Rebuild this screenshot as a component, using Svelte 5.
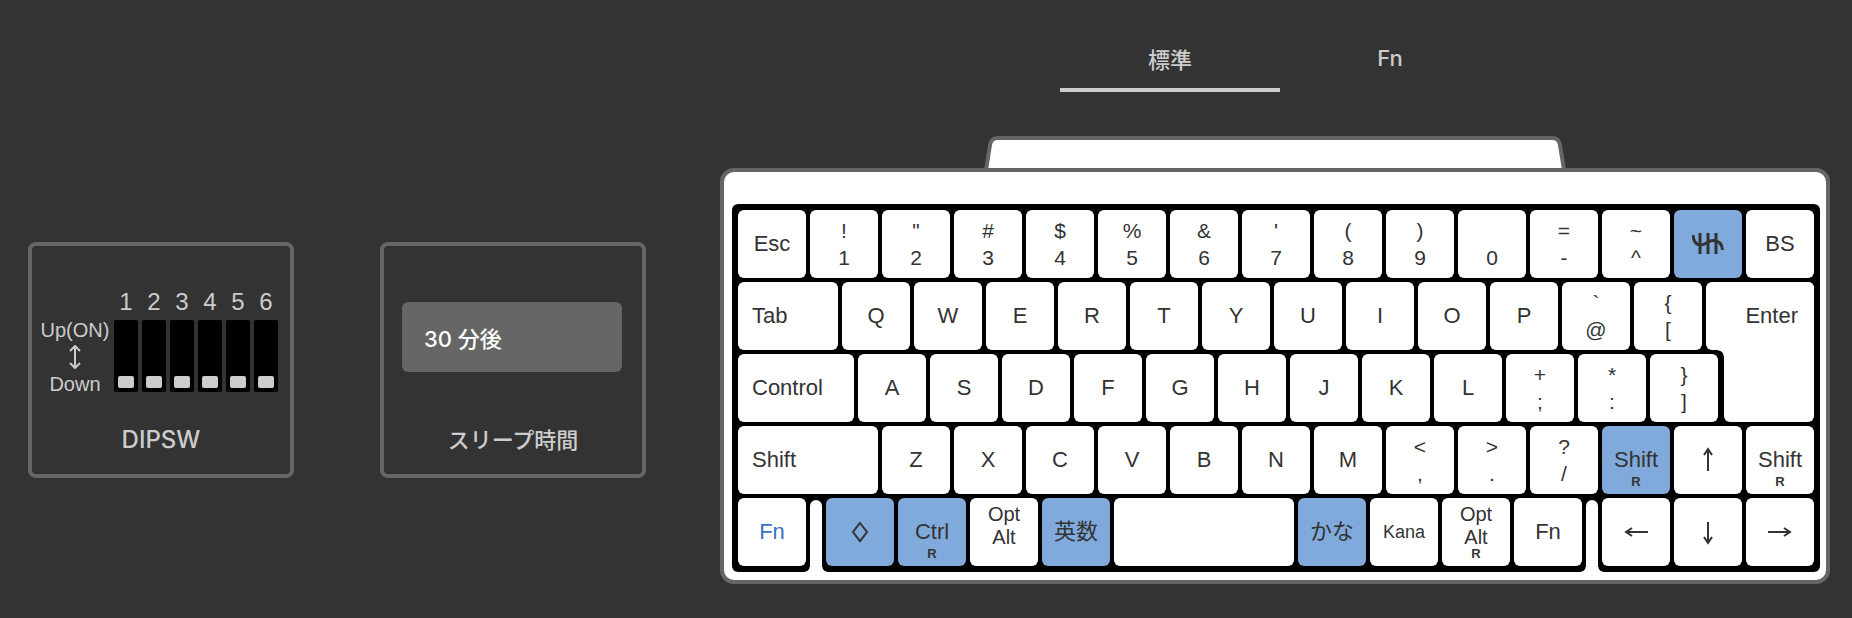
<script lang="ts">
  type Key = {
    label?: string;
    top?: string;
    bottom?: string;
    lines?: string[];
    sub?: string;
    icon?: string;
    span?: number;
    kind?: string;
    slot?: boolean;
  };

  const tabs = ["標準", "Fn"];
  const sleepOptions = ["30 分後"];

  let activeTab = $state("標準");
  let sleep = $state(sleepOptions[0]);
  let switches = $state([false, false, false, false, false, false]);

  const letters = (text: string): Key[] =>
    text.split("").map((label) => ({ label }));
  const pairs = (list: string[]): Key[] =>
    list.map((pair) => ({ top: pair[0], bottom: pair[1] }));

  // one key unit is 18 grid tracks, a full row is 270
  const keys: Key[] = [
    { label: "Esc" },
    ...pairs(["!1", '"2', "#3", "$4", "%5", "&6", "'7", "(8", ")9", " 0", "=-", "~^"]),
    { icon: "hhkb", kind: "changed" },
    { label: "BS" },

    { label: "Tab", span: 26, kind: "wide" },
    ...letters("QWERTYUIOP"),
    ...pairs(["`@", "{["]),
    { label: "Enter", kind: "enter" },

    { label: "Control", span: 30, kind: "wide" },
    ...letters("ASDFGHJKL"),
    ...pairs(["+;", "*:", "}]"]),

    { label: "Shift", span: 36, kind: "wide" },
    ...letters("ZXCVBNM"),
    ...pairs(["<,", ">.", "?/"]),
    { label: "Shift", sub: "R", kind: "changed" },
    { icon: "up" },
    { label: "Shift", sub: "R" },

    { label: "Fn", kind: "active" },
    { slot: true },
    { icon: "diamond", kind: "changed" },
    { label: "Ctrl", sub: "R", kind: "changed" },
    { lines: ["Opt", "Alt"] },
    { label: "英数", kind: "changed" },
    { label: "", span: 46 },
    { label: "かな", kind: "changed" },
    { label: "Kana", kind: "small" },
    { lines: ["Opt", "Alt"], sub: "R" },
    { label: "Fn" },
    { slot: true },
    { icon: "left" },
    { icon: "down" },
    { icon: "right" },
  ];

  const icons: Record<string, string> = {
    hhkb: "M1 7C1.500 13 4 17 9 17C14 17 16 12.500 21 12.500C27 12.500 30 16 30.500 22M8 5V26M16 5V26M24 5V26",
    up: "M16 27V5M12 11L16 5L20 11",
    down: "M16 6V27M12 21L16 27L20 21",
    left: "M28 16H6M12 12L6 16L12 20",
    right: "M4 16H26M20 12L26 16L20 20",
    diamond: "M16 7L23 16L16 25L9 16Z",
  };
</script>

<main>
  <nav>
    {#each tabs as tab}
      <button
        class="tab"
        class:selected={activeTab === tab}
        onclick={() => (activeTab = tab)}
      >
        {tab}
      </button>
    {/each}
  </nav>

  <div class="settings">
    <section class="card">
      <div class="dipsw">
        <div class="scale">
          <span>Up(ON)</span>
          <svg width="16" height="24" viewBox="0 0 16 24">
            <path d="M8 1V23M3 6L8 1L13 6M3 18L8 23L13 18" />
          </svg>
          <span>Down</span>
        </div>
        {#each switches as on, i}
          <label class="switch">
            {i + 1}
            <input type="checkbox" bind:checked={switches[i]} />
          </label>
        {/each}
      </div>
      <h2 class="latin">DIPSW</h2>
    </section>

    <section class="card">
      <div class="sleep">
        <select id="sleep" bind:value={sleep}>
          {#each sleepOptions as option}
            <option>{option}</option>
          {/each}
        </select>
      </div>
      <h2><label for="sleep">スリープ時間</label></h2>
    </section>
  </div>

  <div class="keyboard">
    <svg class="bump" width="582" height="32" viewBox="0 0 582 32">
      <path d="M2 34L6 9Q7 2 14 2H568Q575 2 576 9L580 34" />
    </svg>
    <div class="case">
      <div class="board">
        {#each keys as key}
          {#if key.slot}
            <div class="slot"></div>
          {:else}
            <button class="key {key.kind ?? ''}" style:--span={key.span ?? 18}>
              {#if key.icon}
                <svg
                  class={key.icon}
                  width="32"
                  height="32"
                  viewBox="0 0 32 32"
                  aria-label={key.icon}
                >
                  <path d={icons[key.icon]} />
                </svg>
              {:else if key.bottom}
                <span class="pair">
                  <span>{key.top}</span>
                  <span>{key.bottom}</span>
                </span>
              {:else if key.lines}
                <span class="lines">
                  {#each key.lines as line}
                    <span>{line}</span>
                  {/each}
                </span>
              {:else}
                <span class="label">{key.label}</span>
              {/if}
              {#if key.sub}
                <span class="sub">{key.sub}</span>
              {/if}
            </button>
          {/if}
        {/each}
      </div>
    </div>
  </div>
</main>

<style>
  :global(body) {
    background: #333;
  }

  main {
    display: grid;
    grid-template-columns: auto minmax(1000px, 1fr);
    gap: 44px 74px;
    align-items: center;
    padding: 28px 12px 34px 28px;
    color: #ccc;
    font-family: "Liberation Sans", "Noto Sans CJK JP", sans-serif;
    font-size: 24px;
  }

  button,
  select {
    margin: 0;
    border: none;
    font-family: inherit;
    cursor: pointer;
  }

  /* Tabs */

  nav {
    grid-column: 2;
    display: flex;
    justify-content: center;
  }

  .tab {
    width: 220px;
    height: 64px;
    padding: 0;
    background: none;
    border-bottom: 4px solid transparent;
    color: #ccc;
    font-family: Inter, "Noto Sans CJK JP", sans-serif;
    font-size: 22px;
    font-weight: 500;
  }

  .tab.selected {
    border-bottom-color: #ccc;
  }

  /* Setting cards */

  .settings {
    display: flex;
    gap: 86px;
  }

  .card {
    display: flex;
    flex-direction: column;
    box-sizing: border-box;
    width: 266px;
    height: 236px;
    border: 4px solid #666;
    border-radius: 8px;
  }

  h2 {
    margin: 0;
    font-family: Inter, "Noto Sans CJK JP", sans-serif;
    font-size: 22px;
    line-height: 32px;
    font-weight: 500;
    text-align: center;
  }

  .latin {
    font-size: 24px;
  }

  .dipsw {
    display: flex;
    align-items: flex-end;
    gap: 4px;
    height: 146px;
    margin: 0 12px 32px 8px;
  }

  .scale {
    display: flex;
    flex-direction: column;
    align-items: center;
    gap: 7px;
    width: 70px;
    font-size: 20px;
    line-height: 16px;
  }

  .scale svg {
    fill: none;
    stroke: #ccc;
    stroke-width: 2;
  }

  .switch {
    display: flex;
    flex-direction: column;
    align-items: center;
    gap: 4px;
    line-height: 28px;
  }

  .switch input {
    appearance: none;
    display: flex;
    align-items: flex-end;
    box-sizing: border-box;
    width: 24px;
    height: 72px;
    margin: 0;
    padding: 4px;
    background: #000;
    border-radius: 2px;
    cursor: pointer;
  }

  .switch input::before {
    content: "";
    width: 16px;
    height: 12px;
    background: #ccc;
    border-radius: 2px;
  }

  .switch input:checked {
    align-items: flex-start;
  }

  .sleep {
    padding: 56px 20px 52px 18px;
  }

  select {
    appearance: none;
    display: block;
    width: 100%;
    height: 70px;
    padding: 4px 22px 0;
    background: #666;
    border-radius: 6px;
    color: #fff;
    font-family: Inter, "Noto Sans CJK JP", sans-serif;
    font-size: 22px;
    font-weight: 500;
  }

  /* Keyboard */

  .keyboard {
    display: flex;
    flex-direction: column;
    align-items: center;
    margin-right: 10px;
  }

  .bump {
    display: block;
    fill: #fff;
    stroke: #666;
    stroke-width: 4;
  }

  .case {
    box-sizing: border-box;
    width: 100%;
    padding: 32px 6px 8px 8px;
    background: #fff;
    border: 4px solid #666;
    border-radius: 14px;
  }

  .board {
    display: grid;
    grid-template-columns: repeat(270, 1fr);
    grid-auto-rows: 68px;
    row-gap: 4px;
    padding: 6px 2px 6px 6px;
    background: #000;
    border-radius: 6px;
  }

  .key {
    display: grid;
    place-items: center;
    grid-column: span var(--span);
    margin-right: 4px;
    padding: 0;
    background: #fff;
    border-radius: 6px;
    color: #333;
    font-size: 22px;
    line-height: 24px;
  }

  .key > * {
    grid-area: 1 / 1;
  }

  .key svg {
    fill: none;
    stroke: #333;
    stroke-width: 2;
  }

  .key .hhkb {
    stroke-width: 3;
  }

  .key.changed {
    background: #80aadb;
  }

  .key.active {
    color: #3b6fc4;
  }

  .key.wide {
    justify-items: start;
    padding-left: 14px;
  }

  .key.small {
    font-size: 18px;
  }

  /* L shape: the upper part reaches out over the key in the row below */

  .key.enter {
    position: relative;
    grid-row: 2 / span 2;
    grid-column: 247 / -1;
    align-items: start;
    justify-items: end;
    margin-left: -16px;
    padding: 22px 16px 0 0;
    background: radial-gradient(circle at 0 100%, #000 5px, #fff 6px) 12px 68px / 6px 6px no-repeat;
  }

  .enter::before,
  .enter::after {
    content: "";
    position: absolute;
    top: 0;
    right: 0;
    background: #fff;
    border-radius: 6px;
  }

  .enter::before {
    width: 100%;
    height: 68px;
  }

  .enter::after {
    width: calc(100% - 18px);
    height: 100%;
  }

  .enter .label {
    z-index: 1;
  }

  .pair {
    display: grid;
    grid-template-rows: 27px 27px;
    align-items: center;
    font-size: 21px;
    white-space: pre;
  }

  .lines {
    display: grid;
    align-self: start;
    padding-top: 5px;
    font-size: 20px;
    line-height: 23px;
  }

  .sub {
    align-self: end;
    padding-bottom: 6px;
    font-size: 13px;
    line-height: 13px;
    font-weight: bold;
  }

  .slot {
    position: relative;
    grid-column: span 4;
    margin: 2px 4px -6px 0;
    background: #fff;
    border-radius: 6px 6px 0 0;
  }

  /* rounds the corners of the board on both sides of the slot */
  .slot::after {
    content: "";
    position: absolute;
    inset: auto -5px 0;
    height: 5px;
    background:
      radial-gradient(circle at 0 0, #000 4px, #fff 5px) left / 5px 5px no-repeat,
      radial-gradient(circle at 100% 0, #000 4px, #fff 5px) right / 5px 5px no-repeat;
  }
</style>
